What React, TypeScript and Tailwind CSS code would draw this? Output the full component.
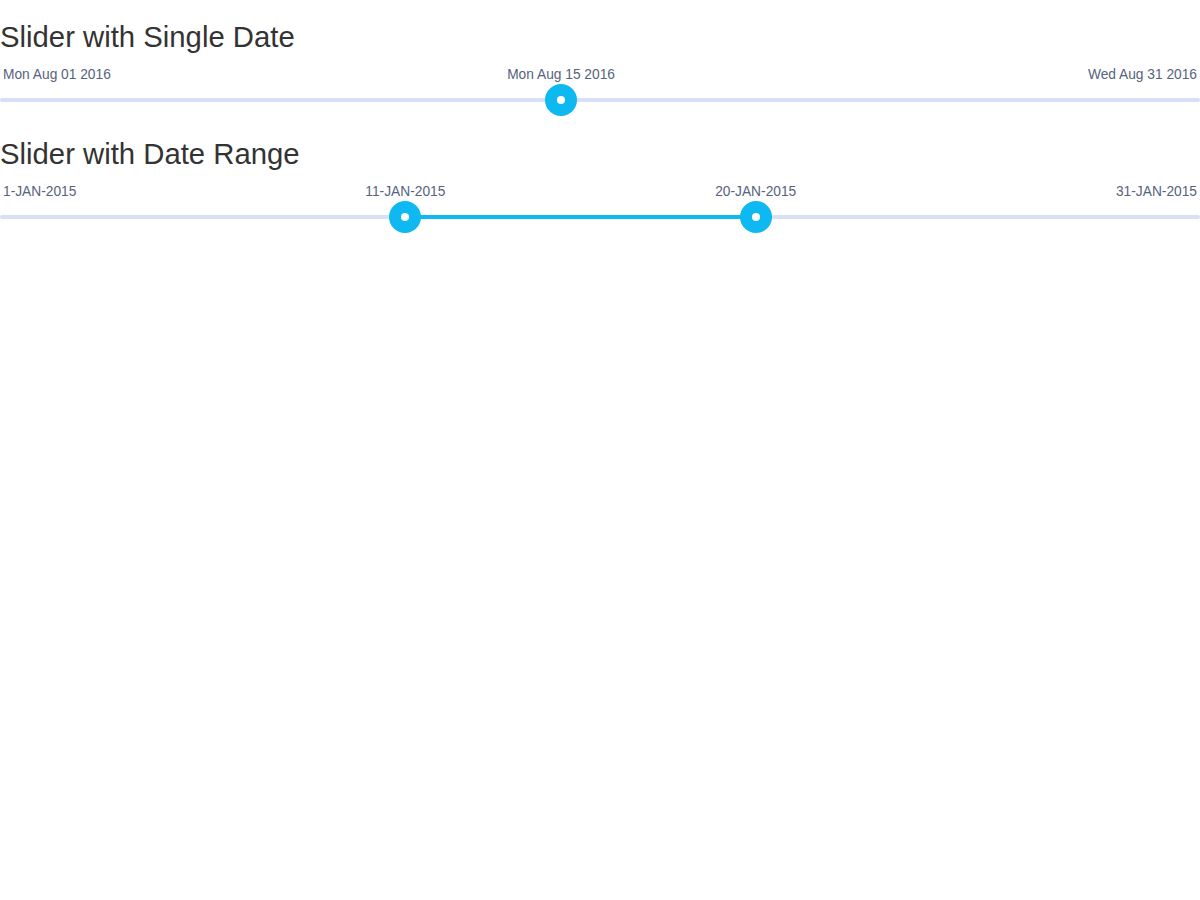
import React from 'react';

const TRACK = 1200;
const HANDLE = 32;

function pos(value: number, min: number, max: number) {
  // left offset of the handle, same maths as the slider lib
  return ((value - min) / (max - min)) * (TRACK - HANDLE);
}

function ValueLabel({ text, left }: { text: string; left: number }) {
  return (
    <span
      className="absolute bottom-[17px] -translate-x-1/2 px-[3px] text-[13.75px] leading-[20px] text-[#55637d] whitespace-nowrap"
      style={{ left: left + HANDLE / 2 }}
    >
      {text}
    </span>
  );
}

function Handle({ left }: { left: number }) {
  return (
    <span
      className="absolute top-[-14px] w-[32px] h-[32px] rounded-full bg-[#0db9f0] flex items-center justify-center z-[3]"
      style={{ left }}
    >
      <span className="w-[8px] h-[8px] rounded-full bg-white" />
    </span>
  );
}

function Slider({
  floor,
  ceil,
  values,
}: {
  floor: string;
  ceil: string;
  values: { label: string; left: number }[];
}) {
  const range = values.length === 2;
  return (
    <div className="flex flex-col mt-[12px]">
      {/* floor / ceil labels */}
      <div className="flex justify-between mb-[13px] px-[3px] text-[13.75px] leading-[20px] text-[#55637d]">
        <span>{floor}</span>
        <span>{ceil}</span>
      </div>
      <div className="relative h-[4px] rounded-[2px] bg-[#d8e0f3]">
        {range && (
          <div
            className="absolute top-0 h-[4px] rounded-[2px] bg-[#0db9f0] z-[2]"
            style={{ left: values[0].left + HANDLE / 2, width: values[1].left - values[0].left }}
          />
        )}
        {values.map((v) => (
          <React.Fragment key={v.label}>
            <ValueLabel text={v.label} left={v.left} />
            <Handle left={v.left} />
          </React.Fragment>
        ))}
      </div>
    </div>
  );
}

export default function App() {
  return (
    <div className="flex flex-col min-h-[900px] bg-white font-['Liberation_Sans',Arial,sans-serif] text-[#333] overflow-hidden">
      <h2 className="mt-[20px] text-[29.3px] leading-[33px] font-normal">Slider with Single Date</h2>
      <Slider floor="Mon Aug 01 2016" ceil="Wed Aug 31 2016" values={[{ label: 'Mon Aug 15 2016', left: pos(15, 1, 31) }]} />
      <h2 className="mt-[35px] text-[29.3px] leading-[33px] font-normal">Slider with Date Range</h2>
      <Slider
        floor="1-JAN-2015"
        ceil="31-JAN-2015"
        values={[
          { label: '11-JAN-2015', left: pos(11, 1, 31) },
          { label: '20-JAN-2015', left: pos(20, 1, 31) },
        ]}
      />
    </div>
  );
}
